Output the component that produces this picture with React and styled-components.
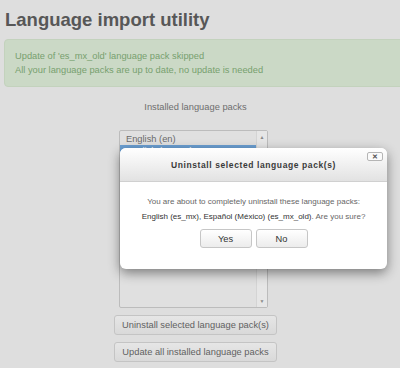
import React from "react";
import styled, { createGlobalStyle } from "styled-components";

const Global = createGlobalStyle`
  html, body { margin: 0; padding: 0; }
  body {
    background: #dedede;
    font-family: "Liberation Sans", Arial, sans-serif;
    width: 400px;
    height: 368px;
    overflow: hidden;
  }
`;

const Page = styled.div`
  position: relative;
  width: 400px;
  height: 368px;
  overflow: hidden;
`;

const Title = styled.h2`
  margin: 0;
  padding: 9px 0 0 5px;
  font-size: 18.5px;
  line-height: 22px;
  font-weight: bold;
  color: #575757;
`;

const Alert = styled.div`
  margin: 8px -20px 0 4px;
  padding: 9px 10px;
  background: #cbd9c6;
  border: 1px solid #c3d2bd;
  border-radius: 4px;
  color: #77a06e;
  font-size: 9.3px;
  line-height: 14px;
`;

const Column = styled.div`
  width: 391px;
  display: flex;
  flex-direction: column;
  align-items: center;
`;

const Label = styled.div`
  margin-top: 13px;
  font-size: 9.3px;
  line-height: 14px;
  color: #6e6e6e;
`;

const ListBox = styled.div`
  margin: 16px 4px 0 0;
  width: 149px;
  height: 178px;
  box-sizing: border-box;
  border: 1px solid #bcbcbc;
  border-radius: 2px;
  background: #e0e0e0;
  display: flex;
`;

const Options = styled.div`
  flex: 1;
  padding-top: 2px;
`;

const Option = styled.div`
  font-size: 9.3px;
  line-height: 12px;
  padding-left: 6px;
  color: ${(p) => (p.$selected ? "#fff" : "#6a6a6a")};
  background: ${(p) => (p.$selected ? "#6b9fd2" : "transparent")};
  white-space: nowrap;
`;

const Scrollbar = styled.div`
  width: 10px;
  background: #e6e6e6;
  border-left: 1px solid #d4d4d4;
  display: flex;
  flex-direction: column;
  justify-content: space-between;
  align-items: center;
  font-size: 5px;
  color: #8a8a8a;
  padding: 3px 0;
`;

const Button = styled.button`
  margin-top: 7px;
  width: ${(p) => p.$w || 163}px;
  height: ${(p) => p.$h || 20}px;
  padding: 0;
  font-family: "Liberation Sans", Arial, sans-serif;
  font-size: 9.3px;
  color: ${(p) => (p.$dark ? "#333" : "#616161")};
  background: ${(p) =>
    p.$dark
      ? "linear-gradient(#ffffff, #ececec)"
      : "linear-gradient(#e6e6e6, #d9d9d9)"};
  border: 1px solid ${(p) => (p.$dark ? "#c6c6c6" : "#c4c4c4")};
  border-radius: 3px;
`;

const Dialog = styled.div`
  position: absolute;
  left: 120px;
  top: 148px;
  width: 267px;
  height: 121px;
  background: #fff;
  border-radius: 6px;
  box-shadow: 0 4px 12px rgba(0, 0, 0, 0.45);
  overflow: hidden;
  display: flex;
  flex-direction: column;
`;

const DialogHeader = styled.div`
  position: relative;
  height: 34px;
  box-sizing: border-box;
  background: linear-gradient(#ffffff, #e2e2e2);
  border-bottom: 1px solid #d0d0d0;
  display: flex;
  align-items: center;
  justify-content: center;
  font-size: 8.5px;
  font-weight: bold;
  letter-spacing: 0.6px;
  color: #3a3a3a;
`;

const Close = styled.div`
  position: absolute;
  right: 4px;
  top: 4px;
  width: 16px;
  height: 9px;
  box-sizing: border-box;
  border: 1px solid #b5b5b5;
  border-radius: 2px;
  background: #fafafa;
  display: flex;
  align-items: center;
  justify-content: center;
  font-size: 7px;
  line-height: 1;
  font-weight: bold;
  color: #555;
  letter-spacing: 0;
`;

const DialogBody = styled.div`
  padding-top: 12px;
  display: flex;
  flex-direction: column;
  align-items: center;
  font-size: 8px;
  line-height: 15px;
  color: #666;
`;

const Strong = styled.span`
  color: #333;
`;

const ButtonRow = styled.div`
  display: flex;
  gap: 4px;
  margin-top: -2px;
`;

export default function App() {
  return (
    <Page>
      <Global />
      <Title>Language import utility</Title>
      <Alert>
        Update of 'es_mx_old' language pack skipped
        <br />
        All your language packs are up to date, no update is needed
      </Alert>
      <Column>
        <Label>Installed language packs</Label>
        <ListBox>
          <Options>
            <Option>English (en)</Option>
            <Option $selected>English (es_mx)</Option>
            <Option $selected>Español (México) (es_mx_old)</Option>
          </Options>
          <Scrollbar>
            <span>▲</span>
            <span>▼</span>
          </Scrollbar>
        </ListBox>
        <Button>Uninstall selected language pack(s)</Button>
        <Button>Update all installed language packs</Button>
      </Column>
      <Dialog>
        <DialogHeader>
          Uninstall selected language pack(s)
          <Close>✕</Close>
        </DialogHeader>
        <DialogBody>
          <div>You are about to completely uninstall these language packs:</div>
          <div>
            <Strong>English (es_mx), Español (México) (es_mx_old)</Strong>. Are you sure?
          </div>
          <ButtonRow>
            <Button $dark $w={52} $h={19}>Yes</Button>
            <Button $dark $w={52} $h={19}>No</Button>
          </ButtonRow>
        </DialogBody>
      </Dialog>
    </Page>
  );
}
